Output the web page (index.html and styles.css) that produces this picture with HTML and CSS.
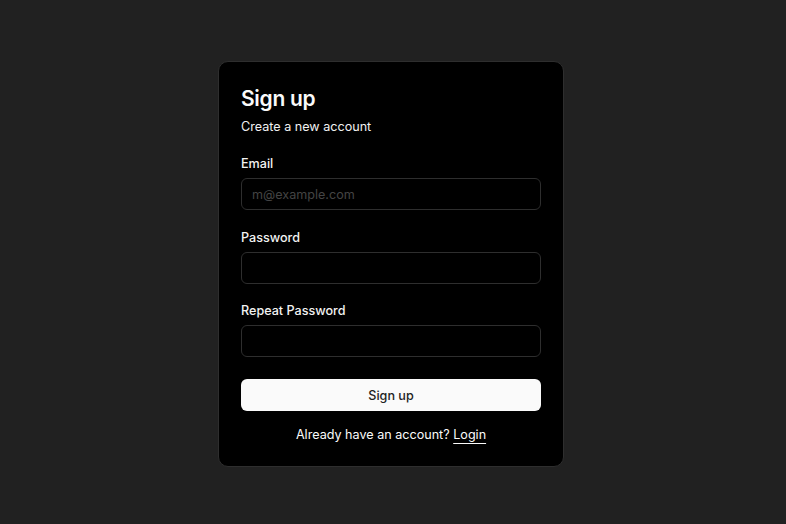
FILE: index.html
```html
<!DOCTYPE html>
<html lang="en">
<head>
<meta charset="utf-8">
<title>Sign up</title>
<link rel="stylesheet" href="styles.css">
</head>
<body>
<main class="page">
  <section class="card">
    <header class="card-header">
      <h1 class="title">Sign up</h1>
      <p class="subtitle">Create a new account</p>
    </header>
    <form class="form">
      <div class="field">
        <label class="label" for="email">Email</label>
        <input class="input" id="email" type="email" placeholder="m@example.com">
      </div>
      <div class="field">
        <label class="label" for="password">Password</label>
        <input class="input" id="password" type="password">
      </div>
      <div class="field">
        <label class="label" for="repeat">Repeat Password</label>
        <input class="input" id="repeat" type="password">
      </div>
      <button class="button" type="button">Sign up</button>
      <p class="footer">Already have an account? <a class="link" href="#">Login</a></p>
    </form>
  </section>
</main>
</body>
</html>
```
FILE: styles.css
```css
* { box-sizing: border-box; }
html, body { margin: 0; padding: 0; }
body {
  background: #212121;
  font-family: Inter, "Noto Sans", sans-serif;
  color: #fafafa;
  width: 786px;
  height: 524px;
}
.page {
  display: flex;
  justify-content: center;
  padding-top: 61px;
  padding-right: 4px;
}
.card {
  width: 346px;
  background: #000;
  border: 1px solid #2e2e2e;
  border-radius: 10px;
  padding: 23px 22px 23px;
}
.card-header { display: flex; flex-direction: column; gap: 6px; }
.title {
  margin: 0;
  font-size: 21px;
  line-height: 28px;
  font-weight: 600;
  letter-spacing: -0.3px;
}
.subtitle {
  margin: 0;
  font-size: 12.6px;
  line-height: 16px;
  color: #f0f0f0;
}
.form {
  margin-top: 20px;
  display: flex;
  flex-direction: column;
}
.field { display: flex; flex-direction: column; gap: 6px; margin-bottom: 18.5px; }
.field:nth-child(3) { margin-bottom: 22px; }
.label {
  font-size: 12.6px;
  line-height: 16px;
  padding-top: 1px;
  font-weight: 500;
  color: #f2f2f2;
}
.input {
  height: 32px;
  width: 100%;
  background: #000;
  border: 1px solid #2e2e2e;
  border-radius: 6px;
  padding: 0 10px;
  font-family: inherit;
  font-size: 12.6px;
  color: #fafafa;
  outline: none;
}
.input::placeholder { color: #444; }
.button {
  height: 32px;
  width: 100%;
  background: #fafafa;
  color: #222;
  border: none;
  border-radius: 6px;
  font-family: inherit;
  font-size: 12.6px;
  font-weight: 500;
}
.footer {
  margin: 16px 0 0;
  text-align: center;
  font-size: 12.6px;
  line-height: 16px;
}
.link {
  color: #fafafa;
  text-decoration: underline;
  text-underline-offset: 4px;
}
```
